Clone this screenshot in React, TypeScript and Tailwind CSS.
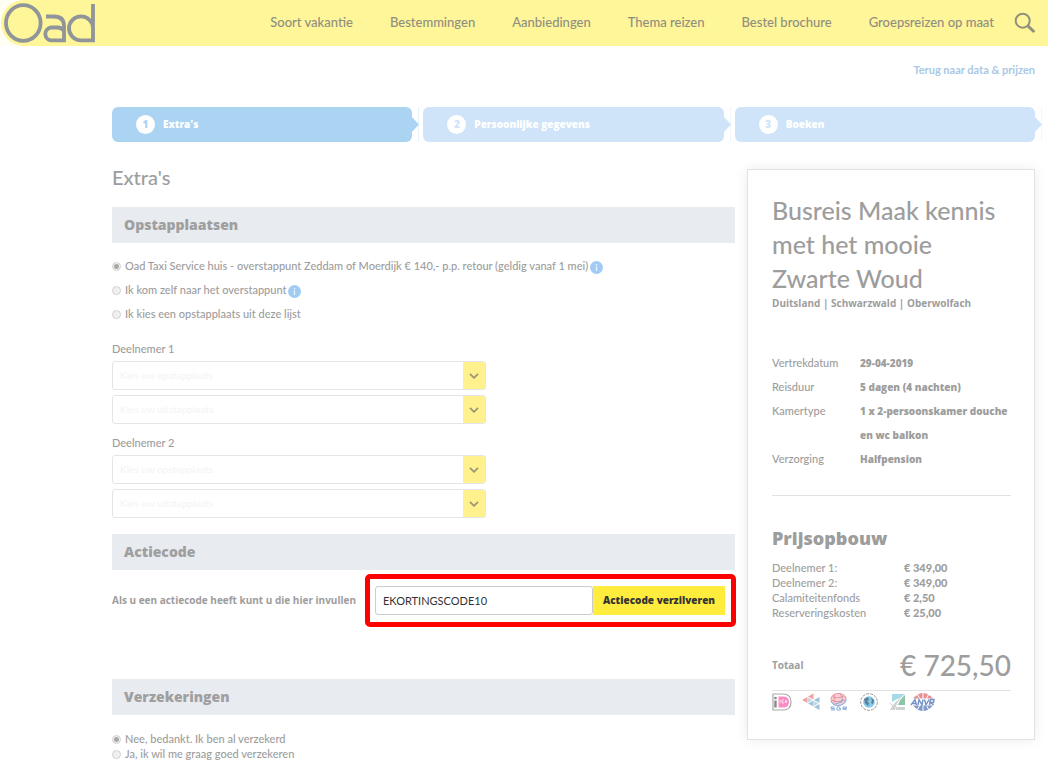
import React from "react";

const NAV = ["Soort vakantie", "Bestemmingen", "Aanbiedingen", "Thema reizen", "Bestel brochure", "Groepsreizen op maat"];

function Logo() {
  return (
    <svg viewBox="0 0 96 46" className="h-[46px] w-24" fill="none" stroke="#8f9598" strokeWidth="3.8" aria-label="Oad" role="img">
      <path d="M0 0H24A22.8 22.8 0 0 0 24 46H0Z" fill="#fffef2" stroke="none" />
      <ellipse cx="23.300" cy="23" rx="17.300" ry="17.800" />
      <path d="M46 16.500H54Q64 16.500 64 26V40.400H51A6.500 6.500 0 0 1 51 27.500H57Q62 27.500 64 31" />
      <path d="M93 4V40.400H81A12 12 0 1 1 93 28.500" />
    </svg>
  );
}

function Step({ n, label, active = false }: { n: number; label: string; active?: boolean }) {
  return (
    <li className={`relative flex h-[35px] items-center gap-2 rounded-md pl-6 font-['Open_Sans',sans-serif] text-[10px] font-extrabold ${active ? "bg-[#abd4f3] text-[#abd4f3]" : "bg-[#cfe4f9] text-[#cfe4f9]"}`}>
      <span className="flex size-[19px] items-center justify-center rounded-full bg-white">{n}</span>
      <span className="text-white">{label}</span>
      <svg viewBox="0 0 8 35" className="absolute -right-[7px] top-0 h-[35px] w-2">
        <path d="M0 9L8 17.500L0 26Z" fill="currentColor" />
        <path d="M7.500 0V35" stroke="currentColor" strokeWidth="1" opacity=".3" />
      </svg>
    </li>
  );
}

function SectionTitle({ children }: { children: React.ReactNode }) {
  return <h2 className="flex h-9 items-center bg-[#e8ebf0] px-3 pb-[2px] font-['Open_Sans',sans-serif] text-[14px] font-extrabold text-[#9f9f9f]">{children}</h2>;
}

function Info() {
  return (
    <button type="button" aria-label="Meer informatie" className="mt-[2px] flex size-[13px] items-center justify-center rounded-full bg-[#a2cbf3]">
      <svg viewBox="0 0 13 13" className="size-[13px]" stroke="#e6f2fd" strokeWidth="1.400">
        <path d="M6.500 3V4.400M6.500 5.500V10" />
      </svg>
    </button>
  );
}

function Radio({ name, label, checked = false, info = false, tight = false }: { name: string; label: string; checked?: boolean; info?: boolean; tight?: boolean }) {
  return (
    <div className={`flex items-center gap-[2px] ${tight ? "h-[15px]" : "h-6"}`}>
      <label className="flex items-center gap-1">
        <input
          type="radio"
          name={name}
          defaultChecked={checked}
          className="size-[9px] appearance-none rounded-full border border-[#d2d2d2] bg-[#f0f0f0] checked:bg-[radial-gradient(circle,#a8a8a8_2px,#f0f0f0_3px)]"
        />
        <span>{label}</span>
      </label>
      {info && <Info />}
    </div>
  );
}

function Picker({ label }: { label: string }) {
  return (
    <div className="relative h-[29px]">
      <select aria-label={label} className="h-full w-full appearance-none rounded-[3px] border border-[#e5e5e5] bg-white px-[7px] text-[10px] text-[#f4f4f4]">
        <option>{label}</option>
      </select>
      <span className="pointer-events-none absolute inset-y-px right-px flex w-[22px] items-center justify-center rounded-r-[2px] bg-[#fff18d]">
        <svg viewBox="0 0 10 6" className="h-[6px] w-[10px]" fill="none" stroke="#9b9677" strokeWidth="1.800">
          <path d="M1 .8L5 4.800L9 .8" />
        </svg>
      </span>
    </div>
  );
}

function Participant({ n }: { n: number }) {
  return (
    <fieldset className="w-[374px] max-w-full">
      <legend className="pb-1 leading-4">Deelnemer {n}</legend>
      <div className="flex flex-col gap-[5px]">
        <Picker label="Kies uw opstapplaats" />
        <Picker label="Kies uw uitstapplaats" />
      </div>
    </fieldset>
  );
}

const TRIP = [
  ["Vertrekdatum", "29-04-2019"],
  ["Reisduur", "5 dagen (4 nachten)"],
  ["Kamertype", "1 x 2-persoonskamer douche en wc balkon"],
  ["Verzorging", "Halfpension"],
];
const PRICES = [
  ["Deelnemer 1:", "€ 349,00"],
  ["Deelnemer 2:", "€ 349,00"],
  ["Calamiteitenfonds", "€ 2,50"],
  ["Reserveringskosten", "€ 25,00"],
];

function PartnerLogos() {
  return (
    <div className="flex h-[22px] items-center">
      <svg viewBox="0 0 20 18" className="h-[18px] w-5" fill="none">
        <path d="M1 1H11Q19 1 19 9T11 17H1Z" stroke="#aaa" strokeWidth="1.200" />
        <path d="M6.500 3.500H11Q17 3.500 17 9T11 14.500H6.500Z" fill="#fa8cc5" />
        <path d="M3.500 7.500V14.500" stroke="#888" strokeWidth="2.400" />
        <circle cx="3.500" cy="5" r="1.300" fill="#888" />
        <path d="M8 7V10M12 7H10V10H12M13 10L14 7L15 10" stroke="#fff" strokeWidth=".7" />
      </svg>
      <svg viewBox="0 0 18 18" className="ml-[10px] h-[18px] w-[18px]">
        <path d="M0 7L5.500 4V10ZM6 3.500L11.500 .5V6.500Z" fill="#f3a0a0" />
        <path d="M6 10.500L11.500 7.500V13.500ZM12 7L17.500 4V10ZM12 14L17.500 11V17Z" fill="#9fc3dc" />
        <path d="M6 4.500V9.500L10.500 7ZM12 8V13L16.500 10.500Z" fill="#c3d7e3" />
      </svg>
      <svg viewBox="0 0 19 18" className="ml-[9px] h-[18px] w-[19px]" fill="none">
        <ellipse cx="9.500" cy="6.500" rx="7.500" ry="6" fill="#f8d5da" />
        <path d="M2 7A7.500 6 0 0 1 17 6M4 4Q9 6 15 3M6 1Q4 5 6 10M11 .8Q15 5 12 10M2 7Q9 10 16 7" stroke="#ec98a2" strokeWidth="1.100" />
        <path d="M2 8Q5 14 12 12Q17 10 17 6M6 11Q12 10 14 6" stroke="#8eaed8" strokeWidth="1.200" />
        <path d="M5.500 14H2V15.500H5.500V17H2M11.500 14H8V17H11.500V15.500H10M14 17V14H17.500V15.500H14L17.500 17" stroke="#8aaad8" strokeWidth="1" />
      </svg>
      <svg viewBox="0 0 18 18" className="ml-3 h-[18px] w-[18px]" fill="none">
        <circle cx="9" cy="9" r="8.300" stroke="#999" strokeWidth="1" strokeDasharray="3 1" />
        <circle cx="9" cy="9" r="5.800" fill="#83c9ea" />
        <path d="M4 6L8 4L9 7L7 8L9 10L8 13L5 10ZM11 5L14 7L13 11L11 10L12 8Z" fill="#627f91" />
      </svg>
      <svg viewBox="0 0 17 18" className="ml-[11px] h-[18px] w-[17px]">
        <path d="M3 1H16L11 5Q7 6 3 9Z" fill="#a6d9e6" />
        <path d="M16 2V12H9Q11 6 16 2Z" fill="#8cc6a6" />
        <path d="M1 17Q5 9 14 3Q8 8 6 17ZM7 14H16V17H7Z" fill="#cfd1d2" />
        <path d="M1 10L5 14" stroke="#ccc" />
      </svg>
      <svg viewBox="0 0 26 18" className="ml-1 h-[18px] w-[26px]">
        <path d="M3 5.500Q13 -5.500 23 5.500Z" fill="#ea8f92" />
        <path d="M3 12.500Q13 23.500 23 12.500Z" fill="#8399cc" />
        <path d="M13 0V6M7 1L10 6M19 1L16 6M13 12V18M7 17L10 12M19 17L16 12" stroke="#fff" />
        <path d="M1 12L5 6.500L6.500 12M3 10.500H6M8 12L9 6.500L12 12L13 6.500M14.500 6.500L16 12L19 6.500M19.500 12L20.500 6.500H24L23.500 9.500H20.500L23.500 12" fill="none" stroke="#7290c6" strokeWidth="1.400" />
      </svg>
    </div>
  );
}

export default function App() {
  return (
    <div className="font-['Lato','Noto_Sans',sans-serif] text-[11px] font-medium text-[#9d9d9d]">
      <header className="flex h-[46px] items-center justify-between bg-[#fff599] pr-3">
        <a href="#" aria-label="Oad"><Logo /></a>
        <div className="flex items-center gap-5">
          <nav className="flex gap-[37px] text-[13px] text-[#8f8f80]">
            {NAV.map((item) => <a key={item} href="#">{item}</a>)}
          </nav>
          <button type="button" aria-label="Zoeken">
            <svg viewBox="0 0 22 22" className="size-[22px]" fill="none" stroke="#91917e">
              <circle cx="8.700" cy="8.700" r="7" strokeWidth="2" />
              <path d="M13.800 13.800L20.300 20" strokeWidth="3" />
            </svg>
          </button>
        </div>
      </header>

      <main className="pl-28 pr-[13px]">
        <div className="flex h-[61px] justify-end pt-4 leading-4">
          <a href="#" className="font-bold text-[#a9c8e6]">Terug naar data &amp; prijzen</a>
        </div>
        <ol className="grid grid-cols-3 gap-[11px]">
          <Step n={1} label="Extra's" active />
          <Step n={2} label="Persoonlijke gegevens" />
          <Step n={3} label="Boeken" />
        </ol>

        <div className="flex items-start gap-3 pt-[27px]">
          <form className="min-w-0 flex-1">
            <h1 className="pb-[22px] text-[20px] leading-4">Extra's</h1>
            <SectionTitle>Opstapplaatsen</SectionTitle>
            <div className="pt-[11px]">
              <Radio name="opstap" label="Oad Taxi Service huis - overstappunt Zeddam of Moerdijk € 140,- p.p. retour (geldig vanaf 1 mei)" checked info />
              <Radio name="opstap" label="Ik kom zelf naar het overstappunt" info />
              <Radio name="opstap" label="Ik kies een opstapplaats uit deze lijst" />
            </div>
            <div className="flex flex-col gap-[11px] pb-4 pt-[15px]">
              <Participant n={1} />
              <Participant n={2} />
            </div>
            <SectionTitle>Actiecode</SectionTitle>
            <div className="-mr-px flex items-center justify-between pt-1">
              <label htmlFor="actiecode" className="whitespace-nowrap font-['Open_Sans',sans-serif] text-[10px] font-bold">Als u een actiecode heeft kunt u die hier invullen</label>
              <div className="flex h-[53px] w-[371px] shrink-0 items-center rounded-[5px] border-[5px] border-[#ff0000] pl-[5px] pr-[6px]">
                <input id="actiecode" defaultValue="EKORTINGSCODE10" className="h-[29px] min-w-0 flex-1 rounded-[3px] border border-[#ccc] bg-white px-[7px] text-[11px] font-normal text-[#333]" />
                <button type="button" className="h-[29px] w-[132px] bg-[#ffec3d] font-['Open_Sans',sans-serif] text-[10px] font-extrabold text-[#333]">Actiecode verzilveren</button>
              </div>
            </div>
            <div className="pt-[52px]">
              <SectionTitle>Verzekeringen</SectionTitle>
            </div>
            <div className="pt-[17px]">
              <Radio name="verzekering" label="Nee, bedankt. Ik ben al verzekerd" checked tight />
              <Radio name="verzekering" label="Ja, ik wil me graag goed verzekeren" tight />
            </div>
          </form>

          <aside className="w-72 shrink-0 border border-[#e2e2e2] bg-white pb-[26px] pl-6 pr-[23px] pt-[23px] shadow-[0_0_12px_rgba(0,0,0,0.08)]">
            <h2 className="text-[25px] leading-[34px]">Busreis Maak kennis met het mooie Zwarte Woud</h2>
            <p className="font-['Open_Sans',sans-serif] text-[10px] font-bold leading-4">Duitsland | Schwarzwald | Oberwolfach</p>
            <dl className="grid grid-cols-[88px_1fr] pb-6 pt-10 leading-6">
              {TRIP.map(([k, v]) => (
                <React.Fragment key={k}><dt>{k}</dt><dd className="font-['Open_Sans',sans-serif] text-[10px] font-extrabold">{v}</dd></React.Fragment>
              ))}
            </dl>
            <div className="border-t border-[#e2e2e2] pt-[31px]">
              <h3 className="pb-[11px] font-['Open_Sans',sans-serif] text-[18px] font-extrabold leading-[22px]">Prijsopbouw</h3>
              <dl className="grid grid-cols-[132px_1fr] leading-[15px]">
                {PRICES.map(([k, v]) => (
                  <React.Fragment key={k}><dt>{k}</dt><dd className="font-black">{v}</dd></React.Fragment>
                ))}
              </dl>
            </div>
            <div className="mt-[29px] flex items-center justify-between border-b border-[#e2e2e2] pb-[9px] leading-8">
              <span className="font-['Open_Sans',sans-serif] text-[10px] font-bold">Totaal</span>
              <span className="text-[28px]">€ 725,50</span>
            </div>
            <PartnerLogos />
          </aside>
        </div>
      </main>
    </div>
  );
}
